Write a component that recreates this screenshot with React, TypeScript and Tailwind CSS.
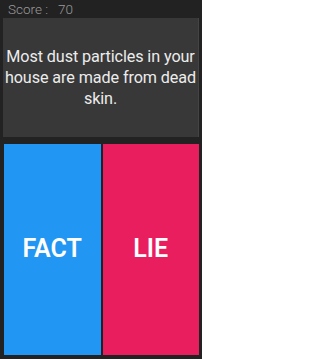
export default function App() {
  return (
    <div className="w-[202px] h-[359px] bg-[#222222] flex flex-col font-['Roboto',sans-serif] overflow-hidden">
      {/* score bar */}
      <div className="h-[18px] pl-[8px] pt-[1px] flex items-center text-[13.5px] font-light text-[#9a9a9a] leading-none">
        <span>Score :</span>
        <span className="ml-[10px]">70</span>
      </div>

      {/* question card */}
      <div className="mx-[3px] h-[119px] bg-[#383838] border-r border-[#444444] flex items-center justify-center px-[1px] text-center">
        <p className="text-[16.2px] leading-[21px] tracking-[-0.1px] text-[#ececec]">
          Most dust particles in your house are made from dead skin.
        </p>
      </div>

      {/* answer buttons */}
      <div className="mt-[7px] h-[211px] flex gap-[2px] pl-[4px] pr-[3px]">
        <button className="flex-1 bg-[#2196f3] flex items-center justify-center text-white text-[25px] font-semibold pb-[2px]">
          FACT
        </button>
        <button className="flex-1 bg-[#e91e5e] flex items-center justify-center text-white text-[25px] font-semibold pb-[2px]">
          LIE
        </button>
      </div>
    </div>
  );
}
